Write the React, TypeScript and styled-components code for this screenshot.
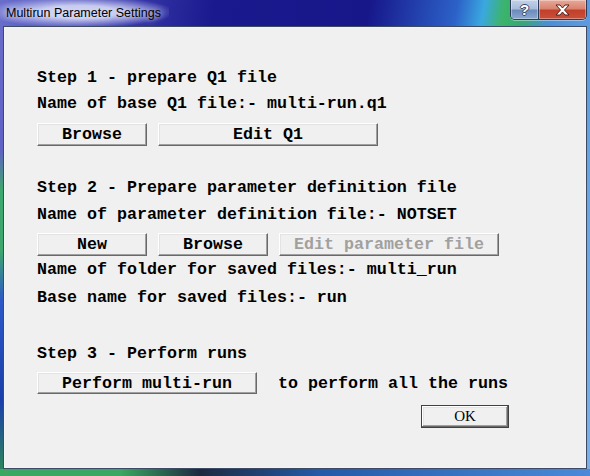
import React from 'react'
import styled, { createGlobalStyle } from 'styled-components'

const GlobalStyle = createGlobalStyle`
    html, body {
        margin: 0;
        padding: 0;
        width: 590px;
        height: 476px;
        overflow: hidden;
    }
`

const MONO = `'Liberation Mono', 'Courier New', monospace`

const Window = styled.div`
    display: flex;
    flex-direction: column;
    width: 590px;
    height: 476px;
    box-sizing: border-box;
    padding: 0 3px 7px 3px;
    background:
        linear-gradient(90deg, #3aa862 0px, #3aa862 120px, #1c2a40 200px, #245aa8 320px, #4a8ad8 590px) bottom / 100% 7px no-repeat,
        linear-gradient(180deg, rgba(0, 0, 0, 0) 150px, rgba(58, 176, 100, 0.9) 190px, rgba(58, 176, 100, 0.9) 250px, rgba(40, 90, 200, 0.9) 300px, rgba(20, 60, 170, 0.9) 400px, rgba(40, 140, 80, 0.9) 470px) left / 3px 100% no-repeat,
        linear-gradient(100deg, #6a6ecb 0%, #3c3cae 18%, #1a1a8e 32%, #17178a 55%, #2c62c8 68%, #3aa8e0 72%, #3cb46a 75%, #36a874 78%, #4a8ed8 82%, #6aa4e2 92%, #7cb0e8 100%);
`

const TitleBar = styled.div`
    display: flex;
    align-items: flex-start;
    justify-content: space-between;
    height: 26px;
    flex: none;
`

const Title = styled.div`
    margin-left: -3px;
    padding: 6px 8px 0 6px;
    height: 20px;
    font-family: 'Liberation Sans', Arial, sans-serif;
    font-size: 12.5px;
    color: #000;
    background: radial-gradient(ellipse 95px 16px at 80px 12px, rgba(220, 224, 250, 0.85) 40%, rgba(200, 205, 245, 0.4) 75%, rgba(200, 205, 245, 0) 100%);
    text-shadow: 0 0 6px rgba(255, 255, 255, 0.9);
`

const CaptionButtons = styled.div`
    display: flex;
    height: 19px;
    border: 1px solid #2c3a58;
    border-top: none;
    border-radius: 0 0 5px 5px;
    overflow: hidden;
    box-shadow: 0 1px 0 rgba(255, 255, 255, 0.4);
`

const CaptionButton = styled.div<{ $close?: boolean }>`
    display: flex;
    align-items: center;
    justify-content: center;
    width: ${(p) => (p.$close ? '47px' : '27px')};
    height: 19px;
    box-shadow: inset 0 0 0 1px rgba(255, 255, 255, 0.35);
    background: ${(p) =>
        p.$close
            ? 'linear-gradient(180deg, #e8a89a 0%, #d98470 45%, #c2402a 55%, #c8503a 100%)'
            : 'linear-gradient(180deg, #c4d2e8 0%, #a8bcdc 45%, #6c8cbc 55%, #8aa8d0 100%)'};
    border-left: ${(p) => (p.$close ? '1px solid #2c3a58' : 'none')};
`

const HelpGlyph = styled.span`
    font-family: 'Liberation Sans', Arial, sans-serif;
    font-weight: bold;
    font-size: 15px;
    color: #fff;
    text-shadow:
        1px 0 #3a4a6a,
        -1px 0 #3a4a6a,
        0 1px #3a4a6a,
        0 -1px #3a4a6a;
`

const Client = styled.div`
    flex: 1;
    display: flex;
    flex-direction: column;
    align-items: flex-start;
    background: #f0f0f0;
    border: 1px solid #3c4a64;
    padding: 41px 0 0 33px;
    box-shadow: inset 0 0 0 1px rgba(255, 255, 255, 0.25);
`

const TextLine = styled.div<{ $gap: number }>`
    margin-top: ${(p) => p.$gap}px;
    font-family: ${MONO};
    font-weight: bold;
    font-size: 16.67px;
    line-height: 20px;
    color: #000;
    white-space: pre;
`

const ButtonRow = styled.div<{ $gap: number }>`
    display: flex;
    align-items: center;
    gap: 11px;
    margin-top: ${(p) => p.$gap}px;
`

const Button = styled.button<{ $width: number; $height?: number }>`
    width: ${(p) => p.$width}px;
    height: ${(p) => p.$height ?? 23}px;
    box-sizing: border-box;
    padding: 0;
    margin: 0;
    font-family: ${MONO};
    font-weight: bold;
    font-size: 16.67px;
    color: #000;
    background: #f0f0f0;
    border: 1px solid;
    border-color: #ffffff #696969 #696969 #ffffff;
    box-shadow:
        inset -1px -1px #a0a0a0,
        inset 1px 1px #e3e3e3;
    &:disabled {
        color: #a0a0a0;
    }
`

const RunNote = styled.span`
    margin-left: 10px;
    font-family: ${MONO};
    font-weight: bold;
    font-size: 16.67px;
    color: #000;
`

const Footer = styled.div`
    align-self: stretch;
    display: flex;
    justify-content: flex-end;
    margin-top: 11px;
    padding-right: 77px;
`

const OkButton = styled.button`
    width: 88px;
    height: 23px;
    box-sizing: border-box;
    padding: 0;
    font-family: 'Liberation Serif', 'Times New Roman', serif;
    font-size: 15px;
    color: #000;
    background: #f0f0f0;
    border: 1px solid #404040;
    box-shadow:
        inset -1px -1px #696969,
        inset 1px 1px #ffffff,
        inset -2px -2px #a0a0a0,
        inset 2px 2px #e3e3e3;
`

export default function App() {
    return (
        <>
            <GlobalStyle />
            <Window>
                <TitleBar>
                    <Title>Multirun Parameter Settings</Title>
                    <CaptionButtons>
                        <CaptionButton>
                            <HelpGlyph>?</HelpGlyph>
                        </CaptionButton>
                        <CaptionButton $close>
                            <svg width="15" height="12" viewBox="0 0 15 12">
                                <path
                                    d="M1 1 H5 L7.5 4 L10 1 H14 L9.5 6 L14 11 H10 L7.5 8 L5 11 H1 L5.5 6 Z"
                                    fill="#fff"
                                    stroke="#5a2018"
                                    strokeWidth="1"
                                    strokeLinejoin="round"
                                />
                            </svg>
                        </CaptionButton>
                    </CaptionButtons>
                </TitleBar>
                <Client>
                    <TextLine $gap={0}>Step 1 - prepare Q1 file</TextLine>
                    <TextLine $gap={6}>Name of base Q1 file:- multi-run.q1</TextLine>
                    <ButtonRow $gap={9}>
                        <Button $width={110}>Browse</Button>
                        <Button $width={220}>Edit Q1</Button>
                    </ButtonRow>
                    <TextLine $gap={32}>Step 2 - Prepare parameter definition file</TextLine>
                    <TextLine $gap={7}>Name of parameter definition file:- NOTSET</TextLine>
                    <ButtonRow $gap={8}>
                        <Button $width={110}>New</Button>
                        <Button $width={110}>Browse</Button>
                        <Button $width={220} disabled>
                            Edit parameter file
                        </Button>
                    </ButtonRow>
                    <TextLine $gap={4}>Name of folder for saved files:- multi_run</TextLine>
                    <TextLine $gap={8}>Base name for saved files:- run</TextLine>
                    <TextLine $gap={36}>Step 3 - Perform runs</TextLine>
                    <ButtonRow $gap={8}>
                        <Button $width={220} $height={22}>
                            Perform multi-run
                        </Button>
                        <RunNote>to perform all the runs</RunNote>
                    </ButtonRow>
                    <Footer>
                        <OkButton>OK</OkButton>
                    </Footer>
                </Client>
            </Window>
        </>
    )
}
